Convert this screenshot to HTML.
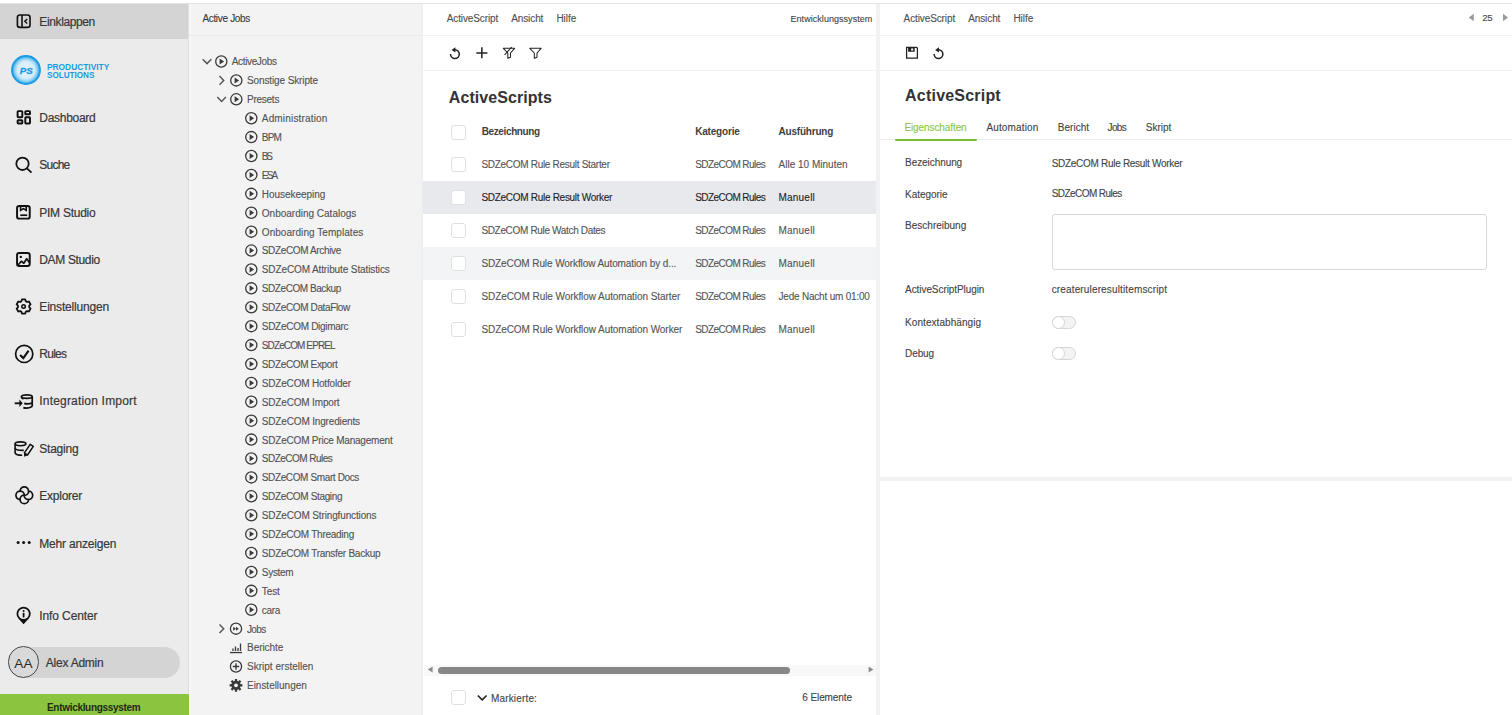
<!DOCTYPE html>
<html><head><meta charset="utf-8"><style>
*{margin:0;padding:0;box-sizing:border-box}
html,body{width:1512px;height:715px;overflow:hidden;background:#fff;position:relative}
body{font-family:"Liberation Sans",sans-serif}
.a{position:absolute}
.t{position:absolute;white-space:nowrap;line-height:20px;height:20px}
.i{position:absolute;overflow:visible}
.cb{position:absolute;width:14.8px;height:14.8px;border:1.5px solid #e0e1e4;border-radius:3px;background:#fff}
</style></head><body>
<div class="a" style="left:0;top:0;width:1512px;height:3px;background:#fff"></div>
<div class="a" style="left:0;top:3px;width:1512px;height:1px;background:#e4e4e4"></div>
<!-- sidebar -->
<div class="a" style="left:0;top:4px;width:189px;height:711px;background:#ebebeb"></div>
<div class="a" style="left:0;top:4px;width:189px;height:34.5px;background:#d4d4d4"></div>
<div class="a" style="left:188px;top:4px;width:1px;height:711px;background:#dedede"></div>
<div class="a" style="left:8px;top:647px;width:172px;height:31px;border-radius:16px;background:#d4d4d4"></div>
<div class="a" style="left:7.8px;top:646.3px;width:31.6px;height:31.6px;border-radius:50%;border:1.3px solid #4a4a4a;background:#d9d9d9"></div>
<div class="t" style="left:14.2px;top:653.8px;font-size:13.6px;color:#2a2a2a;letter-spacing:0.3px">AA</div>
<div class="a" style="left:0;top:694px;width:189px;height:21px;background:#8bc53f"></div>
<!-- tree panel -->
<div class="a" style="left:189px;top:4px;width:234px;height:711px;background:#f3f3f3"></div>
<div class="a" style="left:189px;top:4px;width:2px;height:711px;background:#f7f7f7"></div>
<div class="a" style="left:189px;top:34.5px;width:232px;height:1px;background:#e8eaed"></div>
<div class="a" style="left:421px;top:4px;width:2px;height:711px;background:#efefef"></div>
<!-- middle panel -->
<div class="a" style="left:423px;top:34.7px;width:453px;height:1px;background:#f1f2f3"></div>
<div class="a" style="left:423px;top:70px;width:453px;height:1px;background:#f1f2f3"></div>
<div class="a" style="left:423px;top:181px;width:453px;height:33px;background:#e8e9ec"></div>
<div class="a" style="left:423px;top:247px;width:453px;height:33px;background:#f3f4f6"></div>
<div class="a" style="left:424px;top:665px;width:452px;height:11px;background:#f8f8f8"></div>
<div class="a" style="left:438px;top:667.3px;width:352px;height:7px;border-radius:4px;background:#878787"></div>
<div class="a" style="left:876px;top:4px;width:4px;height:711px;background:#f2f2f2"></div>
<!-- right panel -->
<div class="a" style="left:880px;top:34.7px;width:632px;height:1px;background:#f1f2f3"></div>
<div class="a" style="left:880px;top:70px;width:632px;height:1px;background:#f1f2f3"></div>
<div class="a" style="left:880px;top:139.4px;width:632px;height:1px;background:#eceef0"></div>
<div class="a" style="left:895.2px;top:138.6px;width:82px;height:2px;border-radius:1px;background:#7abd2c"></div>
<div class="a" style="left:1052px;top:214px;width:435px;height:55.5px;border:1.2px solid #d5d7da;border-radius:3px"></div>
<div class="a" style="left:1052px;top:315.8px;width:24px;height:12.8px;border:1px solid #d6d6d6;border-radius:6.4px;background:#f3f3f3"></div>
<div class="a" style="left:1052px;top:315.8px;width:13px;height:12.8px;border:1px solid #d6d6d6;border-radius:6.4px;background:#fff"></div>
<div class="a" style="left:1052px;top:347.3px;width:24px;height:12.8px;border:1px solid #d6d6d6;border-radius:6.4px;background:#f3f3f3"></div>
<div class="a" style="left:1052px;top:347.3px;width:13px;height:12.8px;border:1px solid #d6d6d6;border-radius:6.4px;background:#fff"></div>
<div class="a" style="left:880px;top:477.2px;width:632px;height:3.8px;background:#f2f2f2"></div>
<div class="cb" style="left:451px;top:125.0px"></div><div class="cb" style="left:451px;top:157.3px"></div><div class="cb" style="left:451px;top:190.3px"></div><div class="cb" style="left:451px;top:223.3px"></div><div class="cb" style="left:451px;top:256.3px"></div><div class="cb" style="left:451px;top:289.3px"></div><div class="cb" style="left:451px;top:322.3px"></div><div class="cb" style="left:451px;top:690.4px"></div>
<svg class="i" style="left:15px;top:13px;width:17px;height:17px;" viewBox="0 0 17 17"><rect x="2.4" y="2" width="12.6" height="12.4" rx="2.4" fill="none" stroke="#111" stroke-width="1.65"/><line x1="7" y1="2" x2="7" y2="14.4" stroke="#111" stroke-width="1.6"/><path d="M12.2 6.1 L9.8 8.2 L12.2 10.4" fill="none" stroke="#111" stroke-width="1.4"/></svg><svg class="i" style="left:16px;top:109px;width:16px;height:16px;" viewBox="0 0 16 16"><g fill="none" stroke="#111" stroke-width="1.95"><rect x="1.6" y="2.1" width="4.7" height="6.1" rx=".6"/><rect x="9.3" y="2.1" width="4.7" height="3.2" rx=".6"/><rect x="1.6" y="11.2" width="4.7" height="3.2" rx=".6"/><rect x="9.3" y="8.3" width="4.7" height="6.1" rx=".6"/></g></svg><svg class="i" style="left:14px;top:155px;width:20px;height:20px;" viewBox="0 0 20 20"><circle cx="8.5" cy="8.8" r="6.2" fill="none" stroke="#111" stroke-width="1.8"/><line x1="13" y1="13.3" x2="17.5" y2="17.6" stroke="#111" stroke-width="1.8"/></svg><svg class="i" style="left:15px;top:203.5px;width:17px;height:17px;" viewBox="0 0 17 17"><rect x="2.05" y="1.9" width="12.7" height="12.7" rx="2.2" fill="none" stroke="#111" stroke-width="1.95"/><path d="M5.6 2.2 V6.4 L8.4 4.6 L11.2 6.4 V2.2" fill="none" stroke="#111" stroke-width="1.6"/><line x1="5.3" y1="11.2" x2="12.2" y2="11.2" stroke="#111" stroke-width="1.7"/></svg><svg class="i" style="left:15px;top:250.5px;width:17px;height:17px;" viewBox="0 0 17 17"><rect x="2.05" y="2" width="12.7" height="13" rx="2.2" fill="none" stroke="#111" stroke-width="1.95"/><circle cx="5.8" cy="5.9" r="1.2" fill="#111"/><path d="M2.9 14.2 L6.3 10.3 L8.8 12.2 L11.7 7.8 L14.6 11.8" fill="none" stroke="#111" stroke-width="1.7" stroke-linejoin="round"/></svg><svg class="i" style="left:14px;top:296.8px;width:19px;height:19px;" viewBox="0 0 19 19"><path d="M11.77 14.77 L11.26 16.61 L7.94 16.61 L7.43 14.77 L6.12 14.01 L4.28 14.50 L2.61 11.61 L3.95 10.26 L3.95 8.74 L2.61 7.39 L4.28 4.50 L6.12 4.99 L7.43 4.23 L7.94 2.39 L11.26 2.39 L11.77 4.23 L13.08 4.99 L14.92 4.50 L16.59 7.39 L15.25 8.74 L15.25 10.26 L16.59 11.61 L14.92 14.50 L13.08 14.01Z" fill="none" stroke="#111" stroke-width="1.8" stroke-linejoin="round"/><circle cx="9.6" cy="9.5" r="1.7" fill="none" stroke="#111" stroke-width="1.6"/></svg><svg class="i" style="left:13.5px;top:343.5px;width:20px;height:20px;" viewBox="0 0 20 20"><circle cx="10.2" cy="9.9" r="8.6" fill="none" stroke="#111" stroke-width="1.7"/><path d="M6.1 11.1 L9.3 14.1 L14.6 6.6" fill="none" stroke="#111" stroke-width="2.1"/></svg><svg class="i" style="left:13.5px;top:393px;width:21px;height:18px;" viewBox="0 0 21 18"><g fill="none" stroke="#111" stroke-width="1.75"><ellipse cx="12.8" cy="3.6" rx="5.4" ry="1.8"/><path d="M18.2 3.6 V13.6"/><path d="M10.2 10.3 Q13.5 11.4 18.2 10.1"/><path d="M9.3 14.7 Q13.5 16.1 18.2 13.6"/><path d="M7.4 3.6 Q7.6 5.4 9.5 6.1" stroke-width="1.5"/></g><path d="M0.7 10.3 H6" stroke="#111" stroke-width="1.9"/><path d="M5.4 6.6 L8.7 10.3 L5.4 14 Z" fill="#111"/></svg><svg class="i" style="left:12px;top:438px;width:22px;height:22px;" viewBox="0 0 22 22"><g fill="none" stroke="#111" stroke-width="1.6"><ellipse cx="8.5" cy="5.8" rx="5.4" ry="1.95"/><path d="M3.1 5.8 V14.6 Q3.3 17.2 10.2 17.2"/><path d="M3.1 10.1 Q3.6 12.5 11.8 12.4"/></g><path d="M12.4 14.9 L18.2 6.3 L21.3 8.4 L15.5 17 Z" fill="none" stroke="#111" stroke-width="1.5" stroke-linejoin="round"/><path d="M12.2 14.6 L15.8 17.2 L12.0 18.8Z" fill="#111"/></svg><svg class="i" style="left:14.5px;top:486px;width:19px;height:19px;" viewBox="0 0 19 19"><path d="M5.15 13.55 A4.25 4.25 0 1 1 9.40 9.30 M13.55 13.45 A4.25 4.25 0 1 1 9.30 9.20 M13.45 5.05 A4.25 4.25 0 1 1 9.20 9.30 M5.05 5.15 A4.25 4.25 0 1 1 9.30 9.40" fill="none" stroke="#111" stroke-width="1.7" stroke-linecap="round"/></svg><svg class="i" style="left:14px;top:539px;width:20px;height:7px;" viewBox="0 0 20 7"><circle cx="4.1" cy="3.6" r="1.5" fill="#111"/><circle cx="9.6" cy="3.6" r="1.5" fill="#111"/><circle cx="15.2" cy="3.6" r="1.5" fill="#111"/></svg><svg class="i" style="left:15px;top:605.5px;width:17px;height:20px;" viewBox="0 0 17 20"><path d="M3.37 12.6 A7.1 7.1 0 1 1 13.83 12.6 L8.6 18.3 Z" fill="#111"/><circle cx="8.6" cy="7.8" r="5.3" fill="#ebebeb"/><circle cx="8.6" cy="4.9" r="1" fill="#111"/><rect x="7.7" y="6.8" width="1.8" height="4.7" rx=".8" fill="#111"/></svg>
<svg class="i" style="left:10px;top:54px;width:32px;height:32px" viewBox="0 0 32 32">
<defs><radialGradient id="lg" cx="50%" cy="50%" r="50%"><stop offset="0%" stop-color="#e2f2fb"/><stop offset="58%" stop-color="#d9eefa"/><stop offset="72%" stop-color="#b0def7"/><stop offset="86%" stop-color="#69c2f1"/><stop offset="94%" stop-color="#2aa2e6"/><stop offset="100%" stop-color="#1a9ae2"/></radialGradient></defs>
<circle cx="16" cy="16" r="14.2" fill="url(#lg)" stroke="#1a9ae2" stroke-width="1.4"/>
<text x="16.3" y="19.7" text-anchor="middle" font-family="Liberation Sans" font-style="italic" font-weight="700" font-size="9.2" fill="#1a9ae2" transform="translate(16.3 0) scale(1.06 1) translate(-16.3 0)" stroke="#1a9ae2" stroke-width="0.25">PS</text>
</svg>
<div class="t" style="left:46.5px;top:56.6px;line-height:20px;font-size:9.5px;font-weight:700;color:#1a9ae2;transform:scaleX(.88);transform-origin:0 0">PRODUCTIVITY</div>
<div class="t" style="left:46.5px;top:64.6px;line-height:20px;font-size:9.5px;font-weight:700;color:#1a9ae2;transform:scaleX(.854);transform-origin:0 0">SOLUTIONS</div>
<svg class="i" style="left:0;top:0;width:1512px;height:715px" viewBox="0 0 1512 715"><path d="M202.7 59.3 L207.0 63.6 L211.3 59.3" fill="none" stroke="#555" stroke-width="1.45"/><circle cx="221.3" cy="61.5" r="5.6" fill="none" stroke="#3a3a3a" stroke-width="1.3"/><path d="M219.60 58.50 L224.10 61.50 L219.60 64.50Z" fill="#3a3a3a"/><path d="M219.5 76.1 L223.7 80.4 L219.5 84.7" fill="none" stroke="#555" stroke-width="1.45"/><circle cx="236.3" cy="80.405" r="5.6" fill="none" stroke="#3a3a3a" stroke-width="1.3"/><path d="M234.60 77.41 L239.10 80.41 L234.60 83.41Z" fill="#3a3a3a"/><path d="M217.3 97.1 L221.6 101.4 L225.9 97.1" fill="none" stroke="#555" stroke-width="1.45"/><circle cx="236.3" cy="99.31" r="5.6" fill="none" stroke="#3a3a3a" stroke-width="1.3"/><path d="M234.60 96.31 L239.10 99.31 L234.60 102.31Z" fill="#3a3a3a"/><circle cx="251.3" cy="118.215" r="5.6" fill="none" stroke="#3a3a3a" stroke-width="1.3"/><path d="M249.60 115.22 L254.10 118.22 L249.60 121.22Z" fill="#3a3a3a"/><circle cx="251.3" cy="137.12" r="5.6" fill="none" stroke="#3a3a3a" stroke-width="1.3"/><path d="M249.60 134.12 L254.10 137.12 L249.60 140.12Z" fill="#3a3a3a"/><circle cx="251.3" cy="156.025" r="5.6" fill="none" stroke="#3a3a3a" stroke-width="1.3"/><path d="M249.60 153.03 L254.10 156.03 L249.60 159.03Z" fill="#3a3a3a"/><circle cx="251.3" cy="174.93" r="5.6" fill="none" stroke="#3a3a3a" stroke-width="1.3"/><path d="M249.60 171.93 L254.10 174.93 L249.60 177.93Z" fill="#3a3a3a"/><circle cx="251.3" cy="193.835" r="5.6" fill="none" stroke="#3a3a3a" stroke-width="1.3"/><path d="M249.60 190.84 L254.10 193.84 L249.60 196.84Z" fill="#3a3a3a"/><circle cx="251.3" cy="212.74" r="5.6" fill="none" stroke="#3a3a3a" stroke-width="1.3"/><path d="M249.60 209.74 L254.10 212.74 L249.60 215.74Z" fill="#3a3a3a"/><circle cx="251.3" cy="231.645" r="5.6" fill="none" stroke="#3a3a3a" stroke-width="1.3"/><path d="M249.60 228.65 L254.10 231.65 L249.60 234.65Z" fill="#3a3a3a"/><circle cx="251.3" cy="250.55" r="5.6" fill="none" stroke="#3a3a3a" stroke-width="1.3"/><path d="M249.60 247.55 L254.10 250.55 L249.60 253.55Z" fill="#3a3a3a"/><circle cx="251.3" cy="269.45500000000004" r="5.6" fill="none" stroke="#3a3a3a" stroke-width="1.3"/><path d="M249.60 266.46 L254.10 269.46 L249.60 272.46Z" fill="#3a3a3a"/><circle cx="251.3" cy="288.36" r="5.6" fill="none" stroke="#3a3a3a" stroke-width="1.3"/><path d="M249.60 285.36 L254.10 288.36 L249.60 291.36Z" fill="#3a3a3a"/><circle cx="251.3" cy="307.265" r="5.6" fill="none" stroke="#3a3a3a" stroke-width="1.3"/><path d="M249.60 304.26 L254.10 307.26 L249.60 310.26Z" fill="#3a3a3a"/><circle cx="251.3" cy="326.17" r="5.6" fill="none" stroke="#3a3a3a" stroke-width="1.3"/><path d="M249.60 323.17 L254.10 326.17 L249.60 329.17Z" fill="#3a3a3a"/><circle cx="251.3" cy="345.07500000000005" r="5.6" fill="none" stroke="#3a3a3a" stroke-width="1.3"/><path d="M249.60 342.08 L254.10 345.08 L249.60 348.08Z" fill="#3a3a3a"/><circle cx="251.3" cy="363.98" r="5.6" fill="none" stroke="#3a3a3a" stroke-width="1.3"/><path d="M249.60 360.98 L254.10 363.98 L249.60 366.98Z" fill="#3a3a3a"/><circle cx="251.3" cy="382.885" r="5.6" fill="none" stroke="#3a3a3a" stroke-width="1.3"/><path d="M249.60 379.88 L254.10 382.88 L249.60 385.88Z" fill="#3a3a3a"/><circle cx="251.3" cy="401.79" r="5.6" fill="none" stroke="#3a3a3a" stroke-width="1.3"/><path d="M249.60 398.79 L254.10 401.79 L249.60 404.79Z" fill="#3a3a3a"/><circle cx="251.3" cy="420.69500000000005" r="5.6" fill="none" stroke="#3a3a3a" stroke-width="1.3"/><path d="M249.60 417.70 L254.10 420.70 L249.60 423.70Z" fill="#3a3a3a"/><circle cx="251.3" cy="439.6" r="5.6" fill="none" stroke="#3a3a3a" stroke-width="1.3"/><path d="M249.60 436.60 L254.10 439.60 L249.60 442.60Z" fill="#3a3a3a"/><circle cx="251.3" cy="458.505" r="5.6" fill="none" stroke="#3a3a3a" stroke-width="1.3"/><path d="M249.60 455.50 L254.10 458.50 L249.60 461.50Z" fill="#3a3a3a"/><circle cx="251.3" cy="477.41" r="5.6" fill="none" stroke="#3a3a3a" stroke-width="1.3"/><path d="M249.60 474.41 L254.10 477.41 L249.60 480.41Z" fill="#3a3a3a"/><circle cx="251.3" cy="496.31500000000005" r="5.6" fill="none" stroke="#3a3a3a" stroke-width="1.3"/><path d="M249.60 493.32 L254.10 496.32 L249.60 499.32Z" fill="#3a3a3a"/><circle cx="251.3" cy="515.22" r="5.6" fill="none" stroke="#3a3a3a" stroke-width="1.3"/><path d="M249.60 512.22 L254.10 515.22 L249.60 518.22Z" fill="#3a3a3a"/><circle cx="251.3" cy="534.125" r="5.6" fill="none" stroke="#3a3a3a" stroke-width="1.3"/><path d="M249.60 531.12 L254.10 534.12 L249.60 537.12Z" fill="#3a3a3a"/><circle cx="251.3" cy="553.03" r="5.6" fill="none" stroke="#3a3a3a" stroke-width="1.3"/><path d="M249.60 550.03 L254.10 553.03 L249.60 556.03Z" fill="#3a3a3a"/><circle cx="251.3" cy="571.9350000000001" r="5.6" fill="none" stroke="#3a3a3a" stroke-width="1.3"/><path d="M249.60 568.94 L254.10 571.94 L249.60 574.94Z" fill="#3a3a3a"/><circle cx="251.3" cy="590.84" r="5.6" fill="none" stroke="#3a3a3a" stroke-width="1.3"/><path d="M249.60 587.84 L254.10 590.84 L249.60 593.84Z" fill="#3a3a3a"/><circle cx="251.3" cy="609.745" r="5.6" fill="none" stroke="#3a3a3a" stroke-width="1.3"/><path d="M249.60 606.75 L254.10 609.75 L249.60 612.75Z" fill="#3a3a3a"/><path d="M219.5 624.4 L223.7 628.7 L219.5 633.0" fill="none" stroke="#555" stroke-width="1.45"/><circle cx="236" cy="628.6500000000001" r="5.6" fill="none" stroke="#3a3a3a" stroke-width="1.3"/><path d="M233.20 626.65 L236.00 628.65 L233.20 630.65Z M236.00 626.65 L238.80 628.65 L236.00 630.65Z" fill="#3a3a3a"/><path d="M230 652.5550000000001 H242" stroke="#3a3a3a" stroke-width="1.3"/><path d="M233 651.0550000000001 V648.5550000000001 M235.5 651.0550000000001 V646.5550000000001 M238 651.0550000000001 V648.0550000000001 M240.5 651.0550000000001 V643.5550000000001" stroke="#3a3a3a" stroke-width="1.3"/><circle cx="236" cy="666.46" r="5.6" fill="none" stroke="#3a3a3a" stroke-width="1.3"/><path d="M232.8 666.46 H239.2 M236 663.26 V669.6600000000001" stroke="#3a3a3a" stroke-width="1.4"/><path d="M240.43 684.12 L242.41 684.28 L242.41 686.45 L240.43 686.61 L240.01 687.62 L241.30 689.13 L239.76 690.67 L238.26 689.37 L237.24 689.79 L237.09 691.77 L234.91 691.77 L234.76 689.79 L233.74 689.37 L232.24 690.67 L230.70 689.13 L231.99 687.62 L231.57 686.61 L229.59 686.45 L229.59 684.28 L231.57 684.12 L231.99 683.11 L230.70 681.60 L232.24 680.06 L233.74 681.36 L234.76 680.94 L234.91 678.96 L237.09 678.96 L237.24 680.94 L238.26 681.36 L239.76 680.06 L241.30 681.60 L240.01 683.11Z" fill="#3a3a3a"/><circle cx="236" cy="685.365" r="1.9" fill="#f3f3f3"/></svg>
<svg class="i" style="left:0;top:0;width:1512px;height:715px" viewBox="0 0 1512 715">
<path d="M450.5 54.1 A4.4 4.4 0 1 0 454.9 49.7 H454" fill="none" stroke="#222" stroke-width="1.5"/><path d="M451.5 49.9 L455.4 47.2 L455.4 52.6Z" fill="#222"/>
<path d="M476.3 52.9 H487.4 M481.85 47.3 V58.3" stroke="#222" stroke-width="1.5"/>
<path d="M503.3 48.3 H514.6 L510.5 53 V57.2 L507.8 58.2 V53 Z" fill="none" stroke="#222" stroke-width="1.05" stroke-linejoin="round"/><path d="M504.6 54.9 L511.8 47" stroke="#222" stroke-width="1.05"/>
<path d="M529.8 48.3 H541.1 L537 53 V57.2 L534.3 58.2 V53 Z" fill="none" stroke="#222" stroke-width="1.05" stroke-linejoin="round"/>
<path d="M906.6 47.4 H916.3 Q917.4 47.4 917.4 48.5 V58.1 H906.6 Z" fill="none" stroke="#222" stroke-width="1.25"/><path d="M908.1 47.5 H914.7 V51.7 H908.1 Z M911.1 48.4 V50.6 H913.2 V48.4 Z" fill="#222" fill-rule="evenodd"/>
<path d="M934.1 54.1 A4.4 4.4 0 1 0 938.5 49.7 H937.6" fill="none" stroke="#222" stroke-width="1.5"/><path d="M935.1 49.9 L939 47.2 L939 52.6Z" fill="#222"/>
<path d="M1473.8 13.8 V21.2 L1468.8 17.5Z" fill="#999"/><path d="M1503 13.8 V21.2 L1508 17.5Z" fill="#999"/>
<path d="M427.8 669.6 L432.6 666.6 V672.6Z" fill="#8a8a8a"/><path d="M873.4 669.6 L868.6 666.6 V672.6Z" fill="#8a8a8a"/>
<path d="M477.8 695.5 L482.2 699.8 L486.6 695.5" fill="none" stroke="#222" stroke-width="1.6"/>
</svg>
<div class="t" style="top:11.90px;font-size:12px;color:#383838;letter-spacing:-0.377px;left:39.30px;-webkit-text-stroke:0.2px #383838;">Einklappen</div>
<div class="t" style="top:107.70px;font-size:12px;color:#383838;letter-spacing:-0.290px;left:39.30px;-webkit-text-stroke:0.2px #383838;">Dashboard</div>
<div class="t" style="top:155.30px;font-size:12px;color:#383838;letter-spacing:-0.783px;left:39.30px;-webkit-text-stroke:0.2px #383838;">Suche</div>
<div class="t" style="top:202.50px;font-size:12px;color:#383838;letter-spacing:-0.256px;left:39.30px;-webkit-text-stroke:0.2px #383838;">PIM Studio</div>
<div class="t" style="top:249.70px;font-size:12px;color:#383838;letter-spacing:-0.348px;left:39.30px;-webkit-text-stroke:0.2px #383838;">DAM Studio</div>
<div class="t" style="top:297.10px;font-size:12px;color:#383838;letter-spacing:-0.172px;left:39.30px;-webkit-text-stroke:0.2px #383838;">Einstellungen</div>
<div class="t" style="top:344.10px;font-size:12px;color:#383838;letter-spacing:-0.747px;left:39.30px;-webkit-text-stroke:0.2px #383838;">Rules</div>
<div class="t" style="top:391.40px;font-size:12px;color:#383838;letter-spacing:0.190px;left:39.30px;-webkit-text-stroke:0.2px #383838;">Integration Import</div>
<div class="t" style="top:439.10px;font-size:12px;color:#383838;letter-spacing:-0.234px;left:39.30px;-webkit-text-stroke:0.2px #383838;">Staging</div>
<div class="t" style="top:486.30px;font-size:12px;color:#383838;letter-spacing:-0.241px;left:39.30px;-webkit-text-stroke:0.2px #383838;">Explorer</div>
<div class="t" style="top:533.50px;font-size:12px;color:#383838;letter-spacing:-0.183px;left:39.30px;-webkit-text-stroke:0.2px #383838;">Mehr anzeigen</div>
<div class="t" style="top:605.50px;font-size:12px;color:#383838;letter-spacing:-0.108px;left:39.30px;-webkit-text-stroke:0.2px #383838;">Info Center</div>
<div class="t" style="top:653.20px;font-size:12px;color:#383838;letter-spacing:-0.237px;left:45.80px;-webkit-text-stroke:0.2px #383838;">Alex Admin</div>
<div class="t" style="top:698.10px;font-size:10px;color:#1f2a14;font-weight:700;letter-spacing:-0.307px;left:47.00px;">Entwicklungssystem</div>
<div class="t" style="top:9.10px;font-size:10px;color:#3a3a3a;letter-spacing:-0.324px;left:202.40px;-webkit-text-stroke:0.12px #3a3a3a;">Active Jobs</div>
<div class="t" style="top:52.40px;font-size:10px;color:#525252;letter-spacing:-0.362px;left:231.80px;-webkit-text-stroke:0.12px #525252;">ActiveJobs</div>
<div class="t" style="top:71.31px;font-size:10px;color:#525252;letter-spacing:-0.115px;left:247.00px;-webkit-text-stroke:0.12px #525252;">Sonstige Skripte</div>
<div class="t" style="top:90.21px;font-size:10px;color:#525252;letter-spacing:-0.251px;left:247.00px;-webkit-text-stroke:0.12px #525252;">Presets</div>
<div class="t" style="top:109.12px;font-size:10px;color:#525252;letter-spacing:0.172px;left:261.80px;-webkit-text-stroke:0.12px #525252;">Administration</div>
<div class="t" style="top:128.02px;font-size:10px;color:#525252;letter-spacing:-0.836px;left:261.80px;-webkit-text-stroke:0.12px #525252;">BPM</div>
<div class="t" style="top:146.93px;font-size:10px;color:#525252;letter-spacing:-2.144px;left:261.80px;-webkit-text-stroke:0.12px #525252;">BS</div>
<div class="t" style="top:165.83px;font-size:10px;color:#525252;letter-spacing:-1.758px;left:261.80px;-webkit-text-stroke:0.12px #525252;">ESA</div>
<div class="t" style="top:184.74px;font-size:10px;color:#525252;letter-spacing:-0.040px;left:261.80px;-webkit-text-stroke:0.12px #525252;">Housekeeping</div>
<div class="t" style="top:203.64px;font-size:10px;color:#525252;left:261.80px;-webkit-text-stroke:0.12px #525252;">Onboarding Catalogs</div>
<div class="t" style="top:222.55px;font-size:10px;color:#525252;letter-spacing:0.056px;left:261.80px;-webkit-text-stroke:0.12px #525252;">Onboarding Templates</div>
<div class="t" style="top:241.45px;font-size:10px;color:#525252;letter-spacing:-0.362px;left:261.80px;-webkit-text-stroke:0.12px #525252;">SDZeCOM Archive</div>
<div class="t" style="top:260.36px;font-size:10px;color:#525252;letter-spacing:-0.117px;left:261.80px;-webkit-text-stroke:0.12px #525252;">SDZeCOM Attribute Statistics</div>
<div class="t" style="top:279.26px;font-size:10px;color:#525252;letter-spacing:-0.433px;left:261.80px;-webkit-text-stroke:0.12px #525252;">SDZeCOM Backup</div>
<div class="t" style="top:298.16px;font-size:10px;color:#525252;letter-spacing:-0.367px;left:261.80px;-webkit-text-stroke:0.12px #525252;">SDZeCOM DataFlow</div>
<div class="t" style="top:317.07px;font-size:10px;color:#525252;letter-spacing:-0.288px;left:261.80px;-webkit-text-stroke:0.12px #525252;">SDZeCOM Digimarc</div>
<div class="t" style="top:335.98px;font-size:10px;color:#525252;letter-spacing:-0.889px;left:261.80px;-webkit-text-stroke:0.12px #525252;">SDZeCOM EPREL</div>
<div class="t" style="top:354.88px;font-size:10px;color:#525252;letter-spacing:-0.360px;left:261.80px;-webkit-text-stroke:0.12px #525252;">SDZeCOM Export</div>
<div class="t" style="top:373.78px;font-size:10px;color:#525252;letter-spacing:-0.191px;left:261.80px;-webkit-text-stroke:0.12px #525252;">SDZeCOM Hotfolder</div>
<div class="t" style="top:392.69px;font-size:10px;color:#525252;letter-spacing:-0.170px;left:261.80px;-webkit-text-stroke:0.12px #525252;">SDZeCOM Import</div>
<div class="t" style="top:411.60px;font-size:10px;color:#525252;letter-spacing:-0.159px;left:261.80px;-webkit-text-stroke:0.12px #525252;">SDZeCOM Ingredients</div>
<div class="t" style="top:430.50px;font-size:10px;color:#525252;letter-spacing:-0.205px;left:261.80px;-webkit-text-stroke:0.12px #525252;">SDZeCOM Price Management</div>
<div class="t" style="top:449.40px;font-size:10px;color:#525252;letter-spacing:-0.529px;left:261.80px;-webkit-text-stroke:0.12px #525252;">SDZeCOM Rules</div>
<div class="t" style="top:468.31px;font-size:10px;color:#525252;letter-spacing:-0.377px;left:261.80px;-webkit-text-stroke:0.12px #525252;">SDZeCOM Smart Docs</div>
<div class="t" style="top:487.22px;font-size:10px;color:#525252;letter-spacing:-0.350px;left:261.80px;-webkit-text-stroke:0.12px #525252;">SDZeCOM Staging</div>
<div class="t" style="top:506.12px;font-size:10px;color:#525252;letter-spacing:-0.142px;left:261.80px;-webkit-text-stroke:0.12px #525252;">SDZeCOM Stringfunctions</div>
<div class="t" style="top:525.02px;font-size:10px;color:#525252;letter-spacing:-0.258px;left:261.80px;-webkit-text-stroke:0.12px #525252;">SDZeCOM Threading</div>
<div class="t" style="top:543.93px;font-size:10px;color:#525252;letter-spacing:-0.263px;left:261.80px;-webkit-text-stroke:0.12px #525252;">SDZeCOM Transfer Backup</div>
<div class="t" style="top:562.84px;font-size:10px;color:#525252;letter-spacing:-0.289px;left:261.80px;-webkit-text-stroke:0.12px #525252;">System</div>
<div class="t" style="top:581.74px;font-size:10px;color:#525252;letter-spacing:-0.081px;left:261.80px;-webkit-text-stroke:0.12px #525252;">Test</div>
<div class="t" style="top:600.64px;font-size:10px;color:#525252;letter-spacing:-0.284px;left:261.80px;-webkit-text-stroke:0.12px #525252;">cara</div>
<div class="t" style="top:619.55px;font-size:10px;color:#525252;letter-spacing:-0.642px;left:247.00px;-webkit-text-stroke:0.12px #525252;">Jobs</div>
<div class="t" style="top:638.46px;font-size:10px;color:#525252;letter-spacing:-0.041px;left:247.00px;-webkit-text-stroke:0.12px #525252;">Berichte</div>
<div class="t" style="top:657.36px;font-size:10px;color:#525252;letter-spacing:0.017px;left:247.00px;-webkit-text-stroke:0.12px #525252;">Skript erstellen</div>
<div class="t" style="top:676.26px;font-size:10px;color:#525252;letter-spacing:-0.021px;left:247.00px;-webkit-text-stroke:0.12px #525252;">Einstellungen</div>
<div class="t" style="top:8.90px;font-size:10px;color:#505050;letter-spacing:-0.109px;left:446.70px;-webkit-text-stroke:0.12px #505050;">ActiveScript</div>
<div class="t" style="top:8.90px;font-size:10px;color:#505050;letter-spacing:-0.099px;left:511.20px;-webkit-text-stroke:0.12px #505050;">Ansicht</div>
<div class="t" style="top:8.90px;font-size:10px;color:#505050;left:556.40px;-webkit-text-stroke:0.12px #505050;">Hilfe</div>
<div class="t" style="top:9.30px;font-size:9px;color:#444;letter-spacing:0.045px;right:639.65px;-webkit-text-stroke:0.12px #444;">Entwicklungssystem</div>
<div class="t" style="top:87.90px;font-size:16px;color:#333;font-weight:700;letter-spacing:0.070px;left:448.80px;">ActiveScripts</div>
<div class="t" style="top:122.40px;font-size:10px;color:#3f3f3f;font-weight:700;letter-spacing:-0.373px;left:481.70px;">Bezeichnung</div>
<div class="t" style="top:122.40px;font-size:10px;color:#3f3f3f;font-weight:700;letter-spacing:-0.191px;left:695.20px;">Kategorie</div>
<div class="t" style="top:122.40px;font-size:10px;color:#3f3f3f;font-weight:700;letter-spacing:-0.206px;left:778.50px;">Ausführung</div>
<div class="t" style="top:155.20px;font-size:10px;color:#555555;letter-spacing:-0.291px;left:481.40px;-webkit-text-stroke:0.12px #555555;">SDZeCOM Rule Result Starter</div>
<div class="t" style="top:155.20px;font-size:10px;color:#555555;letter-spacing:-0.562px;left:695.20px;-webkit-text-stroke:0.12px #555555;">SDZeCOM Rules</div>
<div class="t" style="top:155.20px;font-size:10px;color:#555555;letter-spacing:0.012px;left:778.50px;-webkit-text-stroke:0.12px #555555;">Alle 10 Minuten</div>
<div class="t" style="top:188.20px;font-size:10px;color:#1f1f1f;letter-spacing:-0.287px;left:481.40px;-webkit-text-stroke:0.12px #1f1f1f;">SDZeCOM Rule Result Worker</div>
<div class="t" style="top:188.20px;font-size:10px;color:#1f1f1f;letter-spacing:-0.562px;left:695.20px;-webkit-text-stroke:0.12px #1f1f1f;">SDZeCOM Rules</div>
<div class="t" style="top:188.20px;font-size:10px;color:#1f1f1f;letter-spacing:0.211px;left:778.50px;-webkit-text-stroke:0.12px #1f1f1f;">Manuell</div>
<div class="t" style="top:221.20px;font-size:10px;color:#555555;letter-spacing:-0.334px;left:481.40px;-webkit-text-stroke:0.12px #555555;">SDZeCOM Rule Watch Dates</div>
<div class="t" style="top:221.20px;font-size:10px;color:#555555;letter-spacing:-0.562px;left:695.20px;-webkit-text-stroke:0.12px #555555;">SDZeCOM Rules</div>
<div class="t" style="top:221.20px;font-size:10px;color:#555555;letter-spacing:0.211px;left:778.50px;-webkit-text-stroke:0.12px #555555;">Manuell</div>
<div class="t" style="top:254.20px;font-size:10px;color:#555555;letter-spacing:-0.097px;left:481.40px;-webkit-text-stroke:0.12px #555555;">SDZeCOM Rule Workflow Automation by d...</div>
<div class="t" style="top:254.20px;font-size:10px;color:#555555;letter-spacing:-0.562px;left:695.20px;-webkit-text-stroke:0.12px #555555;">SDZeCOM Rules</div>
<div class="t" style="top:254.20px;font-size:10px;color:#555555;letter-spacing:0.211px;left:778.50px;-webkit-text-stroke:0.12px #555555;">Manuell</div>
<div class="t" style="top:287.20px;font-size:10px;color:#555555;letter-spacing:-0.068px;left:481.40px;-webkit-text-stroke:0.12px #555555;">SDZeCOM Rule Workflow Automation Starter</div>
<div class="t" style="top:287.20px;font-size:10px;color:#555555;letter-spacing:-0.562px;left:695.20px;-webkit-text-stroke:0.12px #555555;">SDZeCOM Rules</div>
<div class="t" style="top:287.20px;font-size:10px;color:#555555;letter-spacing:-0.203px;left:778.50px;-webkit-text-stroke:0.12px #555555;">Jede Nacht um 01:00</div>
<div class="t" style="top:320.20px;font-size:10px;color:#555555;letter-spacing:-0.068px;left:481.40px;-webkit-text-stroke:0.12px #555555;">SDZeCOM Rule Workflow Automation Worker</div>
<div class="t" style="top:320.20px;font-size:10px;color:#555555;letter-spacing:-0.562px;left:695.20px;-webkit-text-stroke:0.12px #555555;">SDZeCOM Rules</div>
<div class="t" style="top:320.20px;font-size:10px;color:#555555;letter-spacing:0.211px;left:778.50px;-webkit-text-stroke:0.12px #555555;">Manuell</div>
<div class="t" style="top:688.70px;font-size:10px;color:#444;letter-spacing:0.172px;left:490.90px;-webkit-text-stroke:0.12px #444;">Markierte:</div>
<div class="t" style="top:687.90px;font-size:10px;color:#444;letter-spacing:-0.099px;right:660.10px;-webkit-text-stroke:0.12px #444;">6 Elemente</div>
<div class="t" style="top:8.90px;font-size:10px;color:#505050;letter-spacing:-0.109px;left:903.60px;-webkit-text-stroke:0.12px #505050;">ActiveScript</div>
<div class="t" style="top:8.90px;font-size:10px;color:#505050;letter-spacing:-0.099px;left:968.20px;-webkit-text-stroke:0.12px #505050;">Ansicht</div>
<div class="t" style="top:8.90px;font-size:10px;color:#505050;left:1013.40px;-webkit-text-stroke:0.12px #505050;">Hilfe</div>
<div class="t" style="top:7.80px;font-size:9.6px;color:#4a4a4a;letter-spacing:-0.272px;left:1482.20px;-webkit-text-stroke:0.12px #4a4a4a;">25</div>
<div class="t" style="top:86.10px;font-size:16px;color:#333;font-weight:700;letter-spacing:0.202px;left:905.10px;">ActiveScript</div>
<div class="t" style="top:118.30px;font-size:10px;color:#8cc63e;letter-spacing:-0.091px;left:904.40px;-webkit-text-stroke:0.12px #8cc63e;">Eigenschaften</div>
<div class="t" style="top:118.30px;font-size:10px;color:#444;letter-spacing:0.145px;left:986.40px;-webkit-text-stroke:0.12px #444;">Automation</div>
<div class="t" style="top:118.30px;font-size:10px;color:#444;letter-spacing:0.046px;left:1057.70px;-webkit-text-stroke:0.12px #444;">Bericht</div>
<div class="t" style="top:118.30px;font-size:10px;color:#444;letter-spacing:-0.675px;left:1107.60px;-webkit-text-stroke:0.12px #444;">Jobs</div>
<div class="t" style="top:118.30px;font-size:10px;color:#444;letter-spacing:0.027px;left:1145.70px;-webkit-text-stroke:0.12px #444;">Skript</div>
<div class="t" style="top:153.20px;font-size:10px;color:#444;letter-spacing:-0.073px;left:905.10px;-webkit-text-stroke:0.12px #444;">Bezeichnung</div>
<div class="t" style="top:184.60px;font-size:10px;color:#444;letter-spacing:-0.039px;left:905.10px;-webkit-text-stroke:0.12px #444;">Kategorie</div>
<div class="t" style="top:216.30px;font-size:10px;color:#444;left:905.10px;-webkit-text-stroke:0.12px #444;">Beschreibung</div>
<div class="t" style="top:280.30px;font-size:10px;color:#444;letter-spacing:-0.076px;left:905.10px;-webkit-text-stroke:0.12px #444;">ActiveScriptPlugin</div>
<div class="t" style="top:312.60px;font-size:10px;color:#444;letter-spacing:0.066px;left:905.10px;-webkit-text-stroke:0.12px #444;">Kontextabhängig</div>
<div class="t" style="top:343.60px;font-size:10px;color:#444;letter-spacing:-0.117px;left:905.10px;-webkit-text-stroke:0.12px #444;">Debug</div>
<div class="t" style="top:153.70px;font-size:10px;color:#444;letter-spacing:-0.291px;left:1051.70px;-webkit-text-stroke:0.12px #444;">SDZeCOM Rule Result Worker</div>
<div class="t" style="top:184.10px;font-size:10px;color:#444;letter-spacing:-0.562px;left:1051.70px;-webkit-text-stroke:0.12px #444;">SDZeCOM Rules</div>
<div class="t" style="top:280.10px;font-size:10px;color:#444;letter-spacing:0.147px;left:1051.70px;-webkit-text-stroke:0.12px #444;">createruleresultitemscript</div>
</body></html>
